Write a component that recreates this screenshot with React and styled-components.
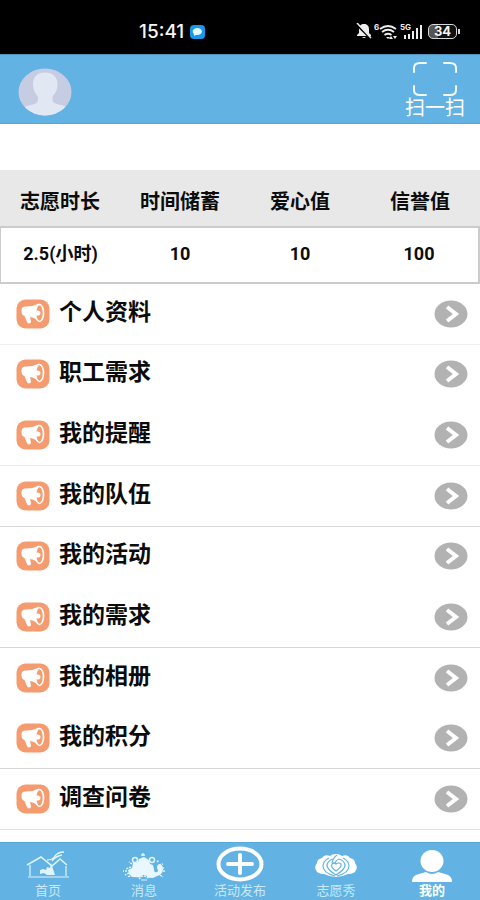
import React from "react";
import styled, { createGlobalStyle } from "styled-components";

const GlobalStyle = createGlobalStyle`
  * { box-sizing: border-box; }
  body {
    margin: 0;
    background: #fff;
    color: #0c0c0c;
    font-family: Inter, "Noto Sans CJK SC", sans-serif;
  }
  button { font: inherit; color: inherit; background: none; border: 0; padding: 0; cursor: pointer; }
  svg { display: block; flex: none; }
`;

const Page = styled.div`
  display: flex;
  flex-direction: column;
  min-height: 100vh;
`;

const StatusBar = styled.div`
  display: grid;
  grid-template-columns: 1fr auto;
  align-items: center;
  height: 54px;
  padding: 8px 20px 0 139px;
  background: #000;
  color: #f4f4f4;
`;

const Clock = styled.div`
  display: flex;
  align-items: center;
  gap: 6px;
  padding-top: 1px;
  font-size: 19px;
  font-weight: 500;
  line-height: 20px;
`;

const StatusIcons = styled.div`
  display: flex;
  align-items: center;
  gap: 2px;
`;

const Battery = styled.div`
  display: flex;
  align-items: center;
  margin-left: 2px;
`;

const BatteryLevel = styled.span`
  width: 29px;
  height: 15px;
  border: 1px solid #d8d8d8;
  border-radius: 5px;
  background: linear-gradient(90deg, #555 34%, #111 34%);
  font-size: 13px;
  font-weight: 700;
  line-height: 13px;
  text-align: center;
`;

const BatteryTip = styled.span`
  width: 2px;
  height: 5px;
  margin-left: 1px;
  background: #d8d8d8;
`;

const TopBar = styled.header`
  display: flex;
  justify-content: space-between;
  align-items: flex-start;
  height: 70px;
  padding: 0 15px 0 18px;
  background: #62b3e3;
  border-top: 1px solid #4e91ba;
  border-bottom: 1px solid #5aa5d1;
`;

const AvatarButton = styled.button`
  margin-top: 13px;
`;

const ScanButton = styled.button`
  display: flex;
  flex-direction: column;
  align-items: center;
  padding-top: 6px;
  color: #fff;
  font-size: 20px;
  line-height: 22px;
`;

const Stats = styled.table`
  width: 100%;
  margin-top: 46px;
  table-layout: fixed;
  border-collapse: separate;
  border-spacing: 0;
  text-align: center;
  font-weight: 700;
`;

const StatHead = styled.th`
  height: 56px;
  padding: 8px 0 0;
  background: #e8e8e8;
  font-size: 20px;
  line-height: 24px;
`;

const StatCell = styled.td`
  height: 58px;
  padding: 0 0 2px;
  border: solid #cbcbcb;
  border-width: 2px 0;
  font-family: Roboto, "Noto Sans CJK SC", sans-serif;
  font-size: 18px;
  line-height: 24px;
  &:first-child { border-left-width: 1px; }
  &:last-child { border-right-width: 2px; }
`;

const Menu = styled.ul`
  flex: 1;
  display: grid;
  grid-auto-rows: 1fr;
  margin: 0;
  padding: 0 0 12px;
  list-style: none;
`;

const MenuItem = styled.li`
  display: flex;
  border-bottom: 1px solid ${(p) => p.$line};
`;

const MenuButton = styled.button`
  flex: 1;
  display: grid;
  grid-template-columns: 34px 1fr 34px;
  align-items: center;
  gap: 9px;
  min-height: 58px;
  padding: 0 12px 0 16px;
  text-align: left;
`;

const MenuLabel = styled.span`
  padding-bottom: 4px;
  font-size: 23px;
  font-weight: 700;
  line-height: 30px;
`;

const TabBar = styled.nav`
  display: grid;
  grid-template-columns: repeat(5, 1fr);
  height: 58px;
  background: #62b3e3;
  border-top: 1px solid #58a8d8;
`;

const Tab = styled.button`
  display: flex;
  flex-direction: column;
  align-items: center;
  justify-content: flex-end;
  padding-bottom: 2px;
  color: ${(p) => (p.$active ? "#fff" : "#c9e8f8")};
  font-size: 13px;
  font-weight: ${(p) => (p.$active ? 700 : 400)};
  line-height: 16px;
  white-space: nowrap;
`;

const Chat = () => (
  <svg width="15" height="14" viewBox="0 0 15 14" aria-hidden="true">
    <rect width="15" height="14" rx="4" fill="#1598ed" />
    <ellipse cx="7.3" cy="6.5" rx="4.6" ry="3.6" fill="#e8faff" />
    <path d="M4 8v3l4-2z" fill="#e8faff" />
  </svg>
);

const Muted = () => (
  <svg width="16" height="16" viewBox="0 0 16 16" aria-hidden="true">
    <path d="M8 1c3 0 5 2 5 5v4l2 2v1H1v-1l2-2V6c0-3 2-5 5-5zM6 14h4q-2 2-4 0z" fill="#eee" />
    <path d="M0 1l15 15" stroke="#000" strokeWidth="2" />
    <path d="M1 0l14 15" stroke="#eee" strokeWidth="1.5" />
  </svg>
);

const Wifi = () => (
  <svg width="24" height="17" viewBox="0 0 24 17" aria-hidden="true">
    <text x="0" y="7" fill="#eee" fontSize="8" fontWeight="700">6</text>
    <g fill="none" stroke="#eee" strokeWidth="1.8">
      <path d="M6 6q8-6 16 0M8 9q6-4.500 12 0M10.500 12q3.500-2.500 7 0" />
    </g>
    <path d="M12 14h4l-2 2zM17 13l2 3h-4zM19 13h4l-2 3z" fill="#eee" />
  </svg>
);

const Signal = () => (
  <svg width="24" height="17" viewBox="0 0 24 17" aria-hidden="true">
    <text x="0" y="7" fill="#eee" fontSize="8" fontWeight="700">5G</text>
    <path d="M4 12h2v4H4zM8 11h2v5H8zM12 8h2v8h-2zM16 5h2v11h-2zM20 2h2v14h-2z" fill="#eee" />
  </svg>
);

const Avatar = () => (
  <svg width="54" height="48" viewBox="0 0 54 48" aria-hidden="true">
    <defs>
      <clipPath id="avatar-oval"><ellipse cx="27" cy="24" rx="26.500" ry="23.500" /></clipPath>
    </defs>
    <g clipPath="url(#avatar-oval)">
      <path d="M0 0h54v48H0z" fill="#c6cde2" />
      <path d="M27 4.500c8 0 12.500 4.500 12.500 12 0 5-2 9-5 12v4c1 3 6 4 10 5 4 1 6 3 8 6v5H2v-5c2-4 5-5 9-6 5-1 8-2 9-5v-4c-3-3-5-7-5-12 0-7.500 4-12 12-12z" fill="#e2e8f3" />
    </g>
  </svg>
);

const ScanFrame = () => (
  <svg width="46" height="36" viewBox="0 0 46 36" fill="none" stroke="#f4fbff" strokeWidth="2" strokeLinecap="round" aria-hidden="true">
    <path d="M2 11V7q0-5 6-5h6M32 2h6q6 0 6 5v4M44 25v4q0 5-6 5h-6M14 34H8q-6 0-6-5v-4" />
  </svg>
);

const Megaphone = () => (
  <svg width="34" height="30" viewBox="0 0 34 30" aria-hidden="true">
    <rect x=".5" y=".5" width="33" height="29" rx="9" fill="#f59b70" />
    <path d="M6 9q1-1.500 3-1.500 7 .5 14-3v18q-4-4-9-4.500l1 4.500q0 2-2 2-1.500 0-2.500-2.500l-2-5Q5 16 5.500 11z" fill="#fff" />
    <ellipse cx="23.500" cy="14" rx="4" ry="8.500" fill="#f59b70" stroke="#fff" strokeWidth="1.700" />
    <path d="M20 11.500q4.500-.5 4.500 2.500T20 16.500z" fill="#fff" />
  </svg>
);

const Arrow = () => (
  <svg width="34" height="28" viewBox="0 0 34 28" aria-hidden="true">
    <ellipse cx="17" cy="14" rx="16.500" ry="13.500" fill="#b2b2b2" />
    <path d="M13 7l9 7-9 7" fill="none" stroke="#fff" strokeWidth="4" />
  </svg>
);

const HomeIcon = () => (
  <svg width="44" height="31" viewBox="0 0 44 31" fill="none" stroke="#dff4fd" aria-hidden="true">
    <path d="M1 14L15 6l11 9 8-7 7 6" strokeWidth="1.500" />
    <path d="M21 9q6 0 8-4 3-4 9-4M26 10q4-5 10-6" strokeWidth="1.300" />
    <path d="M4 14v11M40 15v10" strokeWidth="1.200" />
    <path d="M2 26h41" strokeWidth="1.200" />
    <path d="M14 19l3-1 3 1 1-3 3 1 1-5 2 6 2 6h-8l-3-2-4 1z" fill="#dff4fd" stroke="none" />
  </svg>
);

const MessageIcon = () => (
  <svg width="44" height="30" viewBox="0 0 44 30" aria-hidden="true">
    <path d="M10 25l-3-3-1-4 4-2 1-5 5-1 1-3 5-2 5 3 1 4 3 1 1 4q0 4 3 3 2-1 0-4 0-4 3-4 3 1 3 6-1 5-6 6l-4 2z" fill="#e8f8fe" />
    <g fill="none" stroke="#dff4fd" strokeWidth="1.500">
      <circle cx="13" cy="8" r="2.500" />
      <circle cx="30" cy="8" r="2.500" />
      <path d="M21 1v3M19 3h4" />
      <path d="M9 15l-5 2M5 19H1M7 21l-4 2M8 24l-3 1M37 13l4-1M40 16h3M41 19h2M38 23l3 2M10 12l-3-2M35 10l2-2" strokeDasharray="2 1" />
    </g>
    <path d="M16 28q6-10 12 0z" fill="#62b3e3" />
    <path d="M17 27q5-6 10 0" fill="none" stroke="#dff4fd" strokeWidth="1.500" strokeDasharray="2 1" />
    <path d="M19 28h6" stroke="#dff4fd" />
  </svg>
);

const PublishIcon = () => (
  <svg width="48" height="36" viewBox="0 0 48 36" fill="none" stroke="#fff" aria-hidden="true">
    <ellipse cx="24" cy="18" rx="21.500" ry="15.500" strokeWidth="4" />
    <path d="M12 18h24M24 9v18" strokeWidth="4" strokeLinecap="round" />
  </svg>
);

const LotusIcon = () => (
  <svg width="44" height="29" viewBox="0 0 44 29" aria-hidden="true">
    <path d="M22 1q4 0 6 2 6-2 8 2 5 1 5 5 3 4 1 7-1 4-8 4-6 3-12 3t-12-3q-7 0-8-4-2-3 1-7 0-4 5-5 2-4 8-2 2-2 6-2z" fill="#fff" />
    <g fill="none" stroke="#62b3e3" strokeWidth="1.200">
      <path d="M15 5q-6 3-6 8 0 7 12 10M29 5q6 3 6 8 0 7-12 10" />
      <path d="M19 6q-6 2-6 7 1 4 9 9 8-5 9-9 0-5-6-7" />
      <path d="M23 2q-4 3-5 8M25 6q-3 1-4 4" />
      <path d="M22 18q-6-4-4-7 2-2 4 0 3-2 5 0 1 3-5 7z" />
    </g>
  </svg>
);

const ProfileIcon = () => (
  <svg width="42" height="33" viewBox="0 0 42 33" aria-hidden="true">
    <ellipse cx="21" cy="12" rx="11.500" ry="11" fill="#fff" />
    <path d="M1 33q0-7 7-8l7-2q6 4 12 0l7 2q7 1 7 8z" fill="#fff" />
  </svg>
);

const stats = [
  ["志愿时长", "2.5(小时)"],
  ["时间储蓄", "10"],
  ["爱心值", "10"],
  ["信誉值", "100"],
];

const menu = [
  ["个人资料", "#f0f0f0"],
  ["职工需求", "#ffffff"],
  ["我的提醒", "#ebebeb"],
  ["我的队伍", "#d6d6d6"],
  ["我的活动", "#ffffff"],
  ["我的需求", "#d6d6d6"],
  ["我的相册", "#ffffff"],
  ["我的积分", "#d6d6d6"],
  ["调查问卷", "#e2e2e2"],
];

const tabs = [
  ["首页", HomeIcon],
  ["消息", MessageIcon],
  ["活动发布", PublishIcon],
  ["志愿秀", LotusIcon],
  ["我的", ProfileIcon],
];

export default function App() {
  return (
    <Page>
      <GlobalStyle />
      <StatusBar>
        <Clock>15:41<Chat /></Clock>
        <StatusIcons>
          <Muted />
          <Wifi />
          <Signal />
          <Battery><BatteryLevel>34</BatteryLevel><BatteryTip /></Battery>
        </StatusIcons>
      </StatusBar>
      <TopBar>
        <AvatarButton aria-label="头像"><Avatar /></AvatarButton>
        <ScanButton><ScanFrame />扫一扫</ScanButton>
      </TopBar>
      <Stats>
        <thead>
          <tr>{stats.map(([name]) => <StatHead key={name} scope="col">{name}</StatHead>)}</tr>
        </thead>
        <tbody>
          <tr>{stats.map(([name, value]) => <StatCell key={name}>{value}</StatCell>)}</tr>
        </tbody>
      </Stats>
      <Menu>
        {menu.map(([label, line]) => (
          <MenuItem key={label} $line={line}>
            <MenuButton><Megaphone /><MenuLabel>{label}</MenuLabel><Arrow /></MenuButton>
          </MenuItem>
        ))}
      </Menu>
      <TabBar>
        {tabs.map(([label, Icon]) => (
          <Tab key={label} $active={label === "我的"} aria-current={label === "我的" ? "page" : undefined}>
            <Icon />{label}
          </Tab>
        ))}
      </TabBar>
    </Page>
  );
}
